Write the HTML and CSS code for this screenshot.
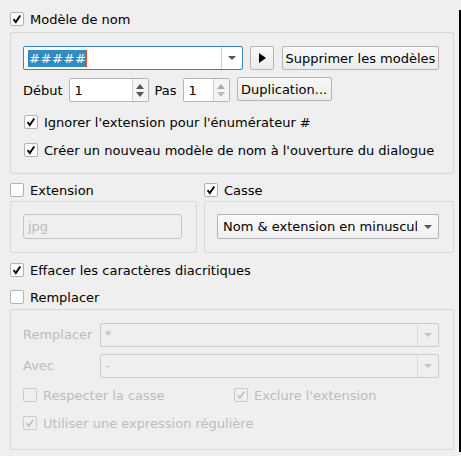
FILE: index.html
```html
<!DOCTYPE html>
<html lang="fr">
<head>
<meta charset="utf-8">
<link rel="stylesheet" href="styles.css">
</head>
<body>
<div class="window">
  <div class="panel">
    <label class="check title-check">
      <span class="box on"><svg viewBox="0 0 14 14"><path d="M3 7.2 L5.6 10.6 L10.8 3" /></svg></span>
      <span>Modèle de nom</span>
    </label>
    <div class="group g1">
      <div class="row r-combo">
        <div class="combo focus pattern">
          <div class="field"><span class="sel">#####</span><span class="caret"></span></div>
          <div class="drop"><span class="arrow"></span></div>
        </div>
        <button class="btn play"><svg viewBox="0 0 10 12"><path d="M2 1 L9 6 L2 11 Z"/></svg></button>
        <button class="btn sup">Supprimer les modèles</button>
      </div>
      <div class="row r-spin">
        <span class="lbl">Début</span>
        <div class="spin s1"><div class="field">1</div><div class="arrows"><span class="up"></span><span class="down"></span></div></div>
        <span class="lbl pas">Pas</span>
        <div class="spin s2"><div class="field">1</div><div class="arrows"><span class="up"></span><span class="down dis"></span></div></div>
        <button class="btn dup">Duplication...</button>
      </div>
      <label class="check c-ign">
        <span class="box on"><svg viewBox="0 0 14 14"><path d="M3 7.2 L5.6 10.6 L10.8 3" /></svg></span>
        <span>Ignorer l'extension pour l'énumérateur #</span>
      </label>
      <label class="check c-new">
        <span class="box on"><svg viewBox="0 0 14 14"><path d="M3 7.2 L5.6 10.6 L10.8 3" /></svg></span>
        <span>Créer un nouveau modèle de nom à l'ouverture du dialogue</span>
      </label>
    </div>

    <div class="split">
      <div class="col left">
        <label class="check">
          <span class="box"></span>
          <span>Extension</span>
        </label>
        <div class="group g2">
          <div class="edit disabled">jpg</div>
        </div>
      </div>
      <div class="col right">
        <label class="check">
          <span class="box on"><svg viewBox="0 0 14 14"><path d="M3 7.2 L5.6 10.6 L10.8 3" /></svg></span>
          <span>Casse</span>
        </label>
        <div class="group g2">
          <div class="combo casse">
            <div class="field">Nom &amp; extension en minuscul</div>
            <div class="drop nosep"><span class="arrow"></span></div>
          </div>
        </div>
      </div>
    </div>

    <label class="check c-eff">
      <span class="box on"><svg viewBox="0 0 14 14"><path d="M3 7.2 L5.6 10.6 L10.8 3" /></svg></span>
      <span>Effacer les caractères diacritiques</span>
    </label>
    <label class="check c-rep">
      <span class="box"></span>
      <span>Remplacer</span>
    </label>
    <div class="group g3">
      <div class="row r-rep">
        <span class="lbl dis-t">Remplacer</span>
        <div class="combo disabled wide">
          <div class="field">*</div>
          <div class="drop"><span class="arrow"></span></div>
        </div>
      </div>
      <div class="row r-avec">
        <span class="lbl dis-t">Avec</span>
        <div class="combo disabled wide">
          <div class="field">-</div>
          <div class="drop"><span class="arrow"></span></div>
        </div>
      </div>
      <div class="row r-checks">
        <label class="check dis c-resp">
          <span class="box"></span>
          <span>Respecter la casse</span>
        </label>
        <label class="check dis">
          <span class="box on"><svg viewBox="0 0 14 14"><path d="M3 7.2 L5.6 10.6 L10.8 3" /></svg></span>
          <span>Exclure l'extension</span>
        </label>
      </div>
      <label class="check dis c-regex">
        <span class="box on"><svg viewBox="0 0 14 14"><path d="M3 7.2 L5.6 10.6 L10.8 3" /></svg></span>
        <span>Utiliser une expression régulière</span>
      </label>
    </div>
  </div>
  <div class="edge"></div>
</div>
</body>
</html>
```

FILE: styles.css
```css
* { box-sizing: border-box; }
html, body { margin: 0; padding: 0; }
body {
  background: #efefef;
  font-family: "DejaVu Sans", sans-serif;
  font-size: 13px;
  color: #000;
  width: 461px;
  height: 456px;
  overflow: hidden;
}
.window { display: flex; height: 456px; }
.panel {
  width: 459px;
  padding: 12px 5px 0 10px;
  display: flex;
  flex-direction: column;
}
.edge {
  width: 2px;
  background: #000;
  margin: 10px 0 4px 0;
}

/* checkboxes */
.check {
  display: flex;
  align-items: center;
  height: 14px;
  gap: 6px;
  white-space: nowrap;
}
.box {
  width: 14px;
  height: 14px;
  flex: none;
  background: #fff;
  border: 1px solid #b2b2b2;
  border-radius: 2px;
  display: flex;
}
.box svg { width: 12px; height: 12px; }
.box svg path { fill: none; stroke: #000; stroke-width: 2.2; stroke-linejoin: miter; }
.check.dis { color: #bcbcbc; }
.check.dis .box { background: #efefef; border-color: #cbcbcb; }
.check.dis .box svg path { stroke: #b8b8b8; stroke-width: 1.6; }

/* groups */
.group {
  border: 1px solid #d7d7d7;
  border-radius: 2px;
}
.g1 {
  margin-top: 6px;
  height: 142px;
  padding: 13px 14px 0 12px;
  display: flex;
  flex-direction: column;
}
.row { display: flex; align-items: center; }
.r-combo { height: 24px; gap: 7px; }
.r-spin { height: 24px; margin-top: 8px; }
.c-ign { margin-top: 13px; margin-left: 1px; }
.c-new { margin-top: 14px; margin-left: 1px; }

/* fields */
.field {
  flex: 1;
  display: flex;
  align-items: center;
  padding-left: 4px;
  overflow: hidden;
  white-space: nowrap;
}
.combo {
  display: flex;
  height: 24px;
  border: 1px solid #b4b4b4;
  border-radius: 2px;
  background: #fff;
}
.combo.focus { border-color: #3584c8; }
.pattern { width: 221px; }
.sel {
  background: #308cc6;
  color: #fff;
  height: 17px;
  line-height: 17px;
  padding: 0 0 0 1px;
  letter-spacing: 0.6px;
}
.caret { width: 1px; height: 17px; background: #d05020; }
.drop {
  width: 21px;
  border-left: 1px solid #cfcfcf;
  display: flex;
  align-items: center;
  justify-content: center;
}
.drop.nosep { border-left: none; }
.arrow {
  width: 0; height: 0;
  border-left: 4px solid transparent;
  border-right: 4px solid transparent;
  border-top: 4px solid #555;
}
.btn {
  font: inherit;
  color: #000;
  height: 24px;
  padding: 0 2px;
  white-space: nowrap;
  border: 1px solid #b4b4b4;
  border-radius: 2px;
  background: linear-gradient(#f8f8f8, #ececec);
  display: flex;
  align-items: center;
  justify-content: center;
}
.play { width: 24px; margin-left: 0; }
.play svg { width: 10px; height: 12px; }
.play svg path { fill: #000; }
.sup { width: 158px; margin-left: 1px; }
.dup { width: 95px; margin-left: 7px; height: 24px; margin-top: -2px; }

.lbl { white-space: nowrap; }
.spin {
  display: flex;
  height: 24px;
  border: 1px solid #b4b4b4;
  border-radius: 2px;
  background: #fff;
  margin-left: 6px;
}
.s1 { width: 80px; }
.s2 { width: 47px; }
.pas { margin-left: 6px; }
.spin .field { padding-left: 5px; }
.arrows {
  width: 16px;
  border-left: 1px solid #cfcfcf;
  background: #f4f4f4;
  display: flex;
  flex-direction: column;
  justify-content: center;
  align-items: center;
  gap: 3px;
}
.up { width: 0; height: 0; border-left: 4px solid transparent; border-right: 4px solid transparent; border-bottom: 5px solid #555; }
.down { width: 0; height: 0; border-left: 4px solid transparent; border-right: 4px solid transparent; border-top: 5px solid #555; }
.down.dis { border-top-color: #bbb; }
.s2 .up { border-bottom-color: #aaa; }

/* extension / casse */
.split { display: flex; gap: 7px; margin-top: 9px; }
.col { display: flex; flex-direction: column; }
.left { width: 187px; }
.right { width: 250px; }
.g2 { margin-top: 4px; height: 52px; padding: 12px 14px 0 12px; }
.edit {
  height: 25px;
  border: 1px solid #c4c4c4;
  border-radius: 3px;
  padding-left: 4px;
  display: flex;
  align-items: center;
}
.edit.disabled { color: #bcbcbc; background: #efefef; }
.casse { height: 25px; width: 222px; background: linear-gradient(#fafafa, #f0f0f0); }
.casse .field { padding-left: 5px; }

.c-eff { margin-top: 10px; }
.c-rep { margin-top: 13px; }

.g3 {
  margin-top: 5px;
  height: 141px;
  padding: 12px 14px 0 12px;
  display: flex;
  flex-direction: column;
}
.r-rep, .r-avec { height: 25px; }
.r-avec { margin-top: 6px; }
.dis-t { color: #bcbcbc; width: 77px; }
.combo.disabled { background: #efefef; border-color: #cbcbcb; color: #bcbcbc; }
.combo.disabled .drop { border-left-color: #dadada; }
.combo.disabled .arrow { border-top-color: #c4c4c4; }
.wide { flex: 1; }
.r-checks { margin-top: 10px; height: 14px; }
.c-resp { width: 211px; }
.c-regex { margin-top: 14px; }
```
